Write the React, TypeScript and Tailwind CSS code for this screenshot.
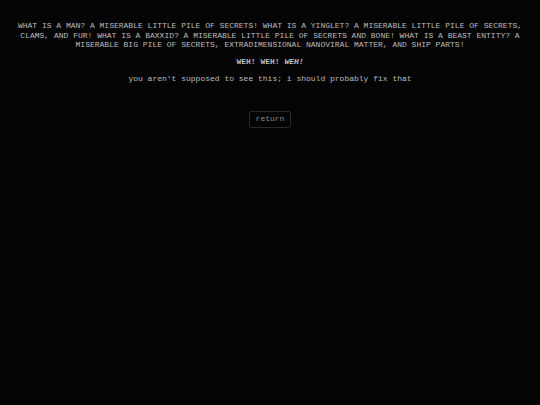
export default function App() {
  return (
    <div className="w-screen min-h-screen bg-[#040404] text-[#bdbdbd] font-['Liberation_Mono',monospace] text-[8px] leading-[9.5px] flex flex-col items-center px-[14px] pt-[21px]">
      <p className="text-center">
        WHAT IS A MAN? A MISERABLE LITTLE PILE OF SECRETS! WHAT IS A YINGLET? A MISERABLE LITTLE PILE OF SECRETS, CLAMS, AND FUR! WHAT IS A BAXXID? A MISERABLE LITTLE PILE OF SECRETS AND BONE! WHAT IS A BEAST ENTITY? A MISERABLE BIG PILE OF SECRETS, EXTRADIMENSIONAL NANOVIRAL MATTER, AND SHIP PARTS!
      </p>
      <p className="mt-[7px] font-bold text-center">
        WEH! WEH! <i>WEH!</i>
      </p>
      <p className="mt-[8px] text-center">you aren't supposed to see this; i should probably fix that</p>
      <button className="mt-[27px] h-[17px] px-[6px] border border-[#2a2a2a] rounded-[2px] text-[#8a8a8a] text-[8px] leading-none">
        return
      </button>
    </div>
  )
}
